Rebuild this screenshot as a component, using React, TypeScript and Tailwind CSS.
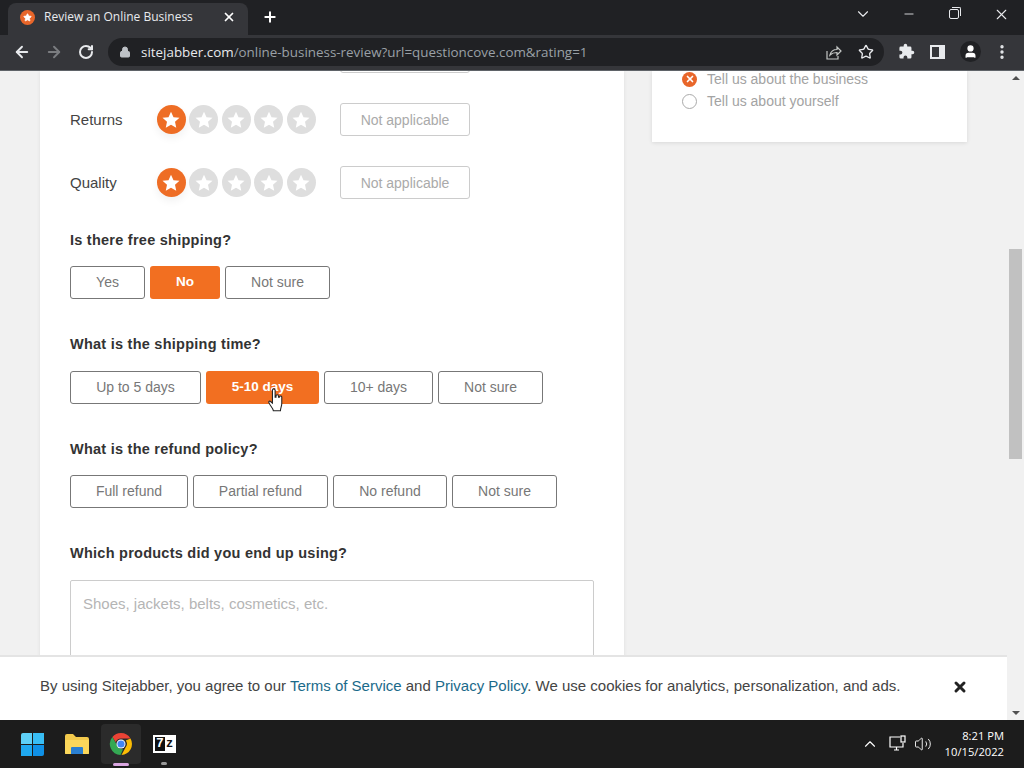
import { ArrowLeft, ArrowRight, ChevronDown, ChevronUp, Lock, Minus, MoreVertical, Plus, RotateCw, Star, User, Volume2, X } from 'lucide-react';

function Stars() {
  return (
    <div className="flex items-center w-[184px] pl-[0.5px] gap-[3.5px]">
      <div className="h-[29px] w-[29px] rounded-full bg-[#ee6d25] flex items-center justify-center shadow-[0_4px_8px_rgba(0,0,0,0.06)]">
        <svg viewBox="0 0 24 24" className="w-[20px] h-[20px] fill-white"><path d="M12 2l3 6.6 7.2.8-5.4 4.8 1.5 7.1L12 17.7l-6.3 3.6 1.5-7.1L1.800 9.400 9 8.600z" /></svg>
      </div>
      {[0, 1, 2, 3].map(i => (
        <div key={i} className="h-[29px] w-[29px] rounded-full bg-[#dedede] flex items-center justify-center">
          <svg viewBox="0 0 24 24" className="w-[20px] h-[20px] fill-white"><path d="M12 2l3 6.6 7.2.8-5.4 4.8 1.500 7.100L12 17.700l-6.300 3.600 1.500-7.100L1.800 9.400 9 8.600z" /></svg>
        </div>
      ))}
    </div>
  );
}

function RatingRow({ label }: { label: string }) {
  return (
    <div className="flex items-center h-[33px]">
      <div className="w-[86px] pt-[1px] text-[15px] text-[#444]">{label}</div>
      <Stars />
      <button className="w-[130px] h-[33px] pt-[1px] border border-[#ccc] rounded-[3px] text-[14px] text-[#aaa]">Not applicable</button>
    </div>
  );
}

function Choice({ label, width, active }: { label: string; width: string; active?: boolean }) {
  return (
    <button className={`${width} h-[33px] rounded-[3px] ${active ? 'bg-[#f26f21] text-white font-bold text-[13.5px]' : 'border border-[#777] text-[#777] text-[14px]'}`}>
      {label}
    </button>
  );
}

function Question({ title, children }: { title: string; children: React.ReactNode }) {
  return (
    <div className="mt-[33px]">
      <div className="text-[14.5px] font-bold text-[#333] tracking-[0.25px] leading-[24px] mb-[14.5px]">{title}</div>
      <div className="flex gap-[5px]">{children}</div>
    </div>
  );
}

function ChromeBar() {
  return (
    <div className="h-[71px] shrink-0 flex flex-col font-['Open_Sans',sans-serif]">
      <div className="h-[35px] bg-[#202124] flex items-end relative">
        <div className="ml-[8px] w-[240px] h-[32px] pb-[4px] bg-[#35363a] rounded-t-[8px] flex items-center px-[12px] text-white">
          <div className="w-[15px] h-[15px] rounded-full bg-[#e8662a] flex items-center justify-center">
            <Star size={9} className="fill-white text-white" />
          </div>
          <span className="ml-[9px] text-[12px] flex-1 text-[#e8eaed]">Review an Online Business</span>
          <X size={14} strokeWidth={3} />
        </div>
        <Plus size={16} strokeWidth={3} className="text-white ml-[14px] mb-[10px]" />
        <div className="absolute right-0 top-0 h-[28px] flex items-center text-[#e8eaed]">
          <ChevronDown size={18} strokeWidth={1.5} className="mr-[30px]" />
          <Minus size={14} strokeWidth={1.5} className="mr-[33px]" />
          <div className="relative w-[10px] h-[10px] mr-[34px] border border-[#e8eaed] rounded-[2px]">
            <div className="absolute -top-[3px] -right-[3px] w-[9px] h-[9px] border-t border-r border-[#e8eaed] rounded-tr-[2px]" />
          </div>
          <X size={17} strokeWidth={1.5} className="mr-[14px]" />
        </div>
      </div>
      <div className="h-[36px] pb-[2px] bg-[#35363a] border-b border-[#5f6368] flex items-center">
        <ArrowLeft size={18} strokeWidth={2.500} className="text-[#e8eaed] ml-[13px]" />
        <ArrowRight size={18} strokeWidth={2.500} className="text-[#7b7d80] ml-[14px]" />
        <RotateCw size={16} strokeWidth={3} className="text-[#e8eaed] ml-[15px]" />
        <div className="ml-[14px] w-[776px] h-[28px] bg-[#202124] rounded-full flex items-center pl-[11px] text-[13.4px]">
          <Lock size={12} className="text-[#bdc1c6] fill-[#bdc1c6]" />
          <span className="ml-[10px] pt-[1px] text-[#e8eaed]">sitejabber.com</span>
          <span className="pt-[1px] text-[#9aa0a6]">/online-business-review?url=questioncove.com&amp;rating=1</span>
          <div className="flex-1" />
          <svg viewBox="0 0 16 16" className="w-[16px] h-[16px] mr-[16px] fill-none stroke-[#c4c7c5] stroke-[1.2]"><path d="M1 7v8h11v-3M4 11c1-4 4-5.500 7-5.500V3l4 4-4 4V8.500c-3 0-5 .500-7 2.500z" /></svg>
          <Star size={16} strokeWidth={2} className="text-[#e8eaed] mr-[10px]" />
        </div>
        <svg viewBox="0 0 24 24" className="ml-[14px] w-[17px] h-[17px] fill-[#e8eaed]"><path d="M20.500 11H19V7a2 2 0 0 0-2-2h-4V3.500a2.500 2.500 0 0 0-5 0V5H4a2 2 0 0 0-2 2v3.800h1.500a2.700 2.700 0 0 1 0 5.400H2V20a2 2 0 0 0 2 2h3.800v-1.500a2.700 2.700 0 0 1 5.400 0V22H17a2 2 0 0 0 2-2v-4h1.500a2.500 2.500 0 0 0 0-5z" /></svg>
        <div className="ml-[15px] w-[15px] h-[14px] bg-[#e8eaed] flex justify-start">
          <div className="ml-[2px] mt-[2px] w-[7px] h-[10px] bg-[#35363a]" />
        </div>
        <div className="ml-[15px] w-[21px] h-[21px] rounded-full bg-[#202124] flex items-center justify-center">
          <User size={15} className="text-white fill-white" />
        </div>
        <MoreVertical size={18} strokeWidth={2.500} className="text-[#e8eaed] ml-[12px]" />
      </div>
    </div>
  );
}

function Taskbar() {
  return (
    <div className="h-[48px] shrink-0 bg-[#1c1c1c] flex items-center relative font-['Open_Sans',sans-serif]">
      <div className="ml-[21px] w-[23px] h-[23px] grid grid-cols-2 gap-[1px]">
        <div className="bg-[#5ed0f7] rounded-tl-[2px]" />
        <div className="bg-[#38bdf4]" />
        <div className="bg-[#1fa8ef]" />
        <div className="bg-[#0f90e6] rounded-br-[2px]" />
      </div>
      <svg viewBox="0 0 26 22" className="ml-[20px] w-[26px] h-[22px]">
        <path d="M1 3a2 2 0 0 1 2-2h6l3 3h11a2 2 0 0 1 2 2v14a1 1 0 0 1-1 1H2a1 1 0 0 1-1-1z" fill="#f2c94c" />
        <path d="M1 7h24v13a1 1 0 0 1-1 1H2a1 1 0 0 1-1-1z" fill="#fbd75b" />
        <path d="M7 21v-6a1 1 0 0 1 1-1h10a1 1 0 0 1 1 1v6z" fill="#2a7fd1" />
      </svg>
      <div className="ml-[11px] w-[40px] h-[40px] rounded-[4px] bg-[#2b2b2b] flex items-center justify-center relative">
        <svg viewBox="0 0 24 24" className="w-[24px] h-[24px]">
          <path d="M12 1a11 11 0 0 1 9.500 5.500H12a5.500 5.500 0 0 0-5.200 3.700L3.400 5A11 11 0 0 1 12 1z" fill="#ea4335" />
          <path d="M21.500 6.500A11 11 0 0 1 12.500 23l4.300-8a5.500 5.500 0 0 0 0-6.500z" fill="#fbbc04" />
          <path d="M3.400 5l4.800 8.500A5.500 5.500 0 0 0 14 17.200L11.500 23A11 11 0 0 1 3.400 5z" fill="#34a853" />
          <circle cx="12" cy="12" r="4.500" fill="#fff" />
          <circle cx="12" cy="12" r="3.600" fill="#4285f4" />
        </svg>
        <div className="absolute bottom-[-2px] left-[12px] w-[16px] h-[3px] rounded-full bg-[#d9a6e0]" />
      </div>
      <div className="ml-[12px] relative w-[23px] h-[18px] bg-white flex items-center pl-[2px] gap-[1px] font-['Liberation_Mono',monospace] font-bold">
        <div className="bg-[#111] text-white text-[13px] leading-[14px] w-[10px] text-center">7</div>
        <div className="text-[#111] text-[12px] leading-[14px]">z</div>
        <div className="absolute bottom-[-12px] left-[8px] w-[6px] h-[3px] rounded-full bg-[#9a9a9a]" />
      </div>
      <div className="flex-1" />
      <ChevronUp size={18} strokeWidth={1.500} className="text-white mr-[10px]" />
      <svg viewBox="0 0 18 18" className="w-[18px] h-[18px] mr-[7px] fill-none stroke-white stroke-[1.200]">
        <path d="M11 2H1v10h13V8M5 15h5M7.500 12v3" /><rect x="12" y="1" width="4" height="6" />
      </svg>
      <Volume2 size={18} strokeWidth={1.200} className="text-white mr-[10px]" />
      <div className="text-right text-[11.200px] leading-[16px] text-white mr-[20px] w-[62px]">
        <div>8:21 PM</div>
        <div>10/15/2022</div>
      </div>
    </div>
  );
}

function HandCursor() {
  return (
    <svg viewBox="0 0 18 26" className="absolute left-[62px] top-[17px] w-[16px] h-[24px]">
      <path d="M5 2a1.500 1.500 0 0 1 3 0v8h1V8.500a1.400 1.400 0 0 1 2.800 0V10h1V9.500a1.400 1.400 0 0 1 2.700 0V17c0 3-1.500 5-1.500 8H6c-.5-3-4-6-5-9-.5-1.500 1-2.500 2.200-1L5 16.500z" fill="#fff" stroke="#222" strokeWidth="1.200" />
    </svg>
  );
}

export default function App() {
  return (
    <div className="w-[1024px] h-[768px] overflow-hidden flex flex-col font-['Liberation_Sans',sans-serif]">
      <ChromeBar />
      <div className="flex-1 min-h-0 relative flex bg-[#f1f1f1] overflow-hidden">
        <div className="flex-1 flex items-start pl-[40px] gap-[28px]">
          <div className="w-[584px] h-[700px] bg-white px-[30px] shadow-[0_0_4px_rgba(0,0,0,0.08)]">
            <div className="flex flex-col gap-[30px] -mt-[31px] -mb-[4.5px]">
              <div className="h-[33px] flex">
                <div className="ml-[270px] w-[130px] h-[33px] border border-[#ccc] rounded-[3px]" />
              </div>
              <RatingRow label="Returns" />
              <RatingRow label="Quality" />
            </div>
            <Question title="Is there free shipping?">
              <Choice label="Yes" width="w-[75px]" />
              <Choice label="No" width="w-[70px]" active />
              <Choice label="Not sure" width="w-[105px]" />
            </Question>
            <Question title="What is the shipping time?">
              <Choice label="Up to 5 days" width="w-[131px]" />
              <div className="relative">
                <Choice label="5-10 days" width="w-[113px]" active />
                <HandCursor />
              </div>
              <Choice label="10+ days" width="w-[109px]" />
              <Choice label="Not sure" width="w-[105px]" />
            </Question>
            <Question title="What is the refund policy?">
              <Choice label="Full refund" width="w-[118px]" />
              <Choice label="Partial refund" width="w-[135px]" />
              <Choice label="No refund" width="w-[114px]" />
              <Choice label="Not sure" width="w-[105px]" />
            </Question>
            <Question title="Which products did you end up using?">
              <textarea
                placeholder="Shoes, jackets, belts, cosmetics, etc."
                className="w-[524px] h-[120px] border border-[#ccc] rounded-[2px] px-[12px] py-[12px] text-[15px] placeholder:text-[#b5b5b5] resize-none"
              />
            </Question>
          </div>
          <div className="w-[315px] h-[71px] bg-white shadow-[0_1px_4px_rgba(0,0,0,0.1)] pl-[30px] text-[14px] text-[#a3a3a3]">
            <div className="flex items-center h-[22px] -mt-[3px] pt-0">
              <div className="w-[15px] h-[15px] rounded-full bg-[#e8662a] flex items-center justify-center">
                <X size={10} strokeWidth={4} className="text-white" />
              </div>
              <span className="ml-[10px]">Tell us about the business</span>
            </div>
            <div className="flex items-center h-[22px]">
              <div className="w-[15px] h-[15px] rounded-full border border-[#aaa]" />
              <span className="ml-[10px]">Tell us about yourself</span>
            </div>
          </div>
        </div>

        <div className="w-[17px] shrink-0 bg-[#f1f1f1] relative">
          <div className="absolute top-[5px] left-[5px] w-0 h-0 border-x-[4px] border-x-transparent border-b-[4px] border-b-[#505050]" />
          <div className="absolute top-[178px] left-[2px] w-[13px] h-[210px] bg-[#c1c1c1]" />
          <div className="absolute bottom-[5px] left-[5px] w-0 h-0 border-x-[4px] border-x-transparent border-t-[4px] border-t-[#505050]" />
        </div>

        <div className="absolute left-0 bottom-0 w-[1007px] h-[65px] pb-[5px] bg-white border-t-2 border-[#e4e4e4] flex items-center pl-[40px] text-[15px] text-[#444]">
          <span>
            By using Sitejabber, you agree to our <span className="text-[#1a6a8a]">Terms of Service</span> and{' '}
            <span className="text-[#1a6a8a]">Privacy Policy</span>. We use cookies for analytics, personalization, and ads.
          </span>
          <X size={16} strokeWidth={4.500} className="absolute left-[952px] top-[22px] text-[#222]" />
        </div>
      </div>
      <Taskbar />
    </div>
  );
}
